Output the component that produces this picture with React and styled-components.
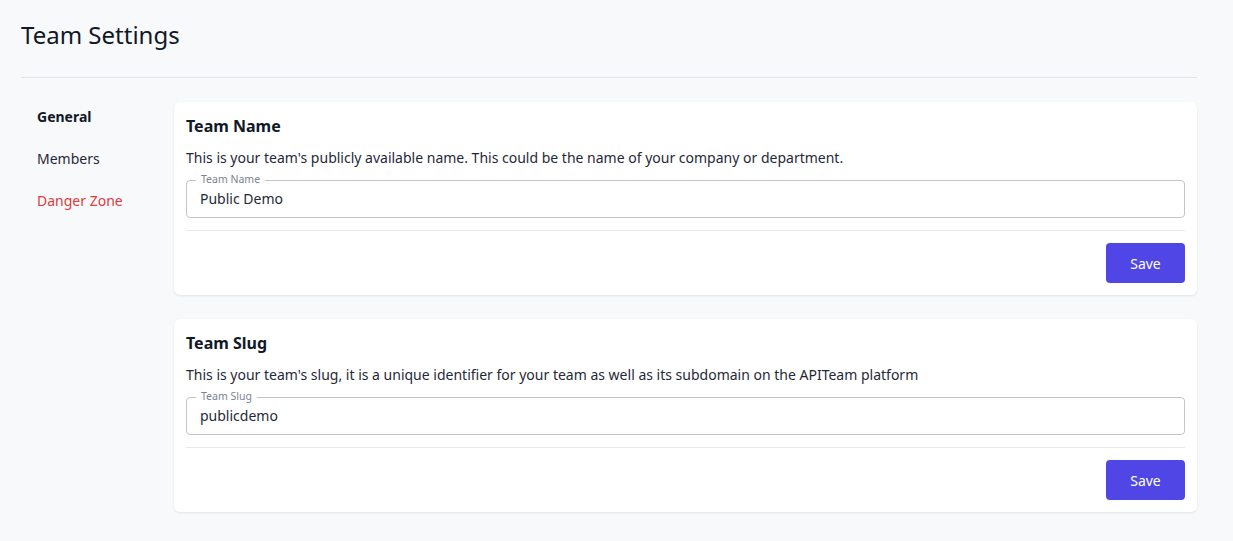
import React from "react";
import styled, { createGlobalStyle } from "styled-components";

const GlobalStyle = createGlobalStyle`
  html, body {
    margin: 0;
    padding: 0;
    background: #f8f9fb;
    font-family: "Noto Sans", "Open Sans", sans-serif;
    color: #1f2937;
  }
  * { box-sizing: border-box; }
`;

const Page = styled.div`
  padding: 17px 36px 30px 21px;
`;

const Header = styled.header`
  border-bottom: 1px solid #e3e5ea;
  padding-bottom: 24px;
  margin-bottom: 24px;

  h1 {
    margin: 0;
    font-size: 24px;
    line-height: 36px;
    font-weight: 400;
    color: #111827;
  }
`;

const Layout = styled.div`
  display: grid;
  grid-template-columns: 153px 1fr;
`;

const SideNav = styled.nav`
  display: flex;
  flex-direction: column;
  gap: 22px;
  padding: 5px 16px 0;
`;

const NavItem = styled.a`
  font-size: 14px;
  line-height: 20px;
  cursor: pointer;
  font-weight: ${({ $active }) => ($active ? 700 : 400)};
  color: ${({ $danger, $active }) =>
    $danger ? "#e0393e" : $active ? "#111827" : "#1f2937"};
`;

const Cards = styled.div`
  display: flex;
  flex-direction: column;
  gap: 24px;
`;

const Card = styled.section`
  background: #fff;
  border-radius: 6px;
  box-shadow: 0 1px 3px rgba(15, 23, 42, 0.06), 0 1px 2px rgba(15, 23, 42, 0.04);
  padding: 12px;
`;

const CardTitle = styled.h2`
  margin: 0;
  font-size: 16px;
  line-height: 24px;
  font-weight: 700;
  color: #111827;
`;

const CardText = styled.p`
  margin: 10px 0 12px;
  font-size: 14px;
  line-height: 20px;
  color: #1f2937;
`;

const Field = styled.fieldset`
  position: relative;
  margin: 0;
  padding: 0 13px;
  height: 38px;
  border: 1px solid #c4c4c4;
  border-radius: 4px;
  display: flex;
  align-items: center;

  legend {
    position: absolute;
    top: -8px;
    left: 9px;
    padding: 0 5px;
    background: #fff;
    font-size: 10.5px;
    line-height: 12px;
    color: #7a8394;
  }
`;

const Input = styled.input`
  border: none;
  outline: none;
  padding: 0;
  width: 100%;
  font-family: inherit;
  font-size: 14px;
  line-height: 20px;
  color: #1f2937;
  background: transparent;
`;

const Divider = styled.hr`
  margin: 12px 0;
  border: none;
  border-top: 1px solid #e6e8ee;
`;

const Actions = styled.div`
  display: flex;
  justify-content: flex-end;
`;

const SaveButton = styled.button`
  width: 79px;
  height: 40px;
  border: none;
  border-radius: 4px;
  background: #4f46e5;
  color: #fff;
  font-family: inherit;
  font-size: 14px;
  cursor: pointer;
`;

const SettingCard = ({ title, text, label, value }) => (
  <Card>
    <CardTitle>{title}</CardTitle>
    <CardText>{text}</CardText>
    <Field>
      <legend>{label}</legend>
      <Input defaultValue={value} />
    </Field>
    <Divider />
    <Actions>
      <SaveButton>Save</SaveButton>
    </Actions>
  </Card>
);

export default function App() {
  return (
    <>
      <GlobalStyle />
      <Page>
        <Header>
          <h1>Team Settings</h1>
        </Header>
        <Layout>
          <SideNav>
            <NavItem $active>General</NavItem>
            <NavItem>Members</NavItem>
            <NavItem $danger>Danger Zone</NavItem>
          </SideNav>
          <Cards>
            <SettingCard
              title="Team Name"
              text="This is your team's publicly available name. This could be the name of your company or department."
              label="Team Name"
              value="Public Demo"
            />
            <SettingCard
              title="Team Slug"
              text="This is your team's slug, it is a unique identifier for your team as well as its subdomain on the APITeam platform"
              label="Team Slug"
              value="publicdemo"
            />
          </Cards>
        </Layout>
      </Page>
    </>
  );
}
